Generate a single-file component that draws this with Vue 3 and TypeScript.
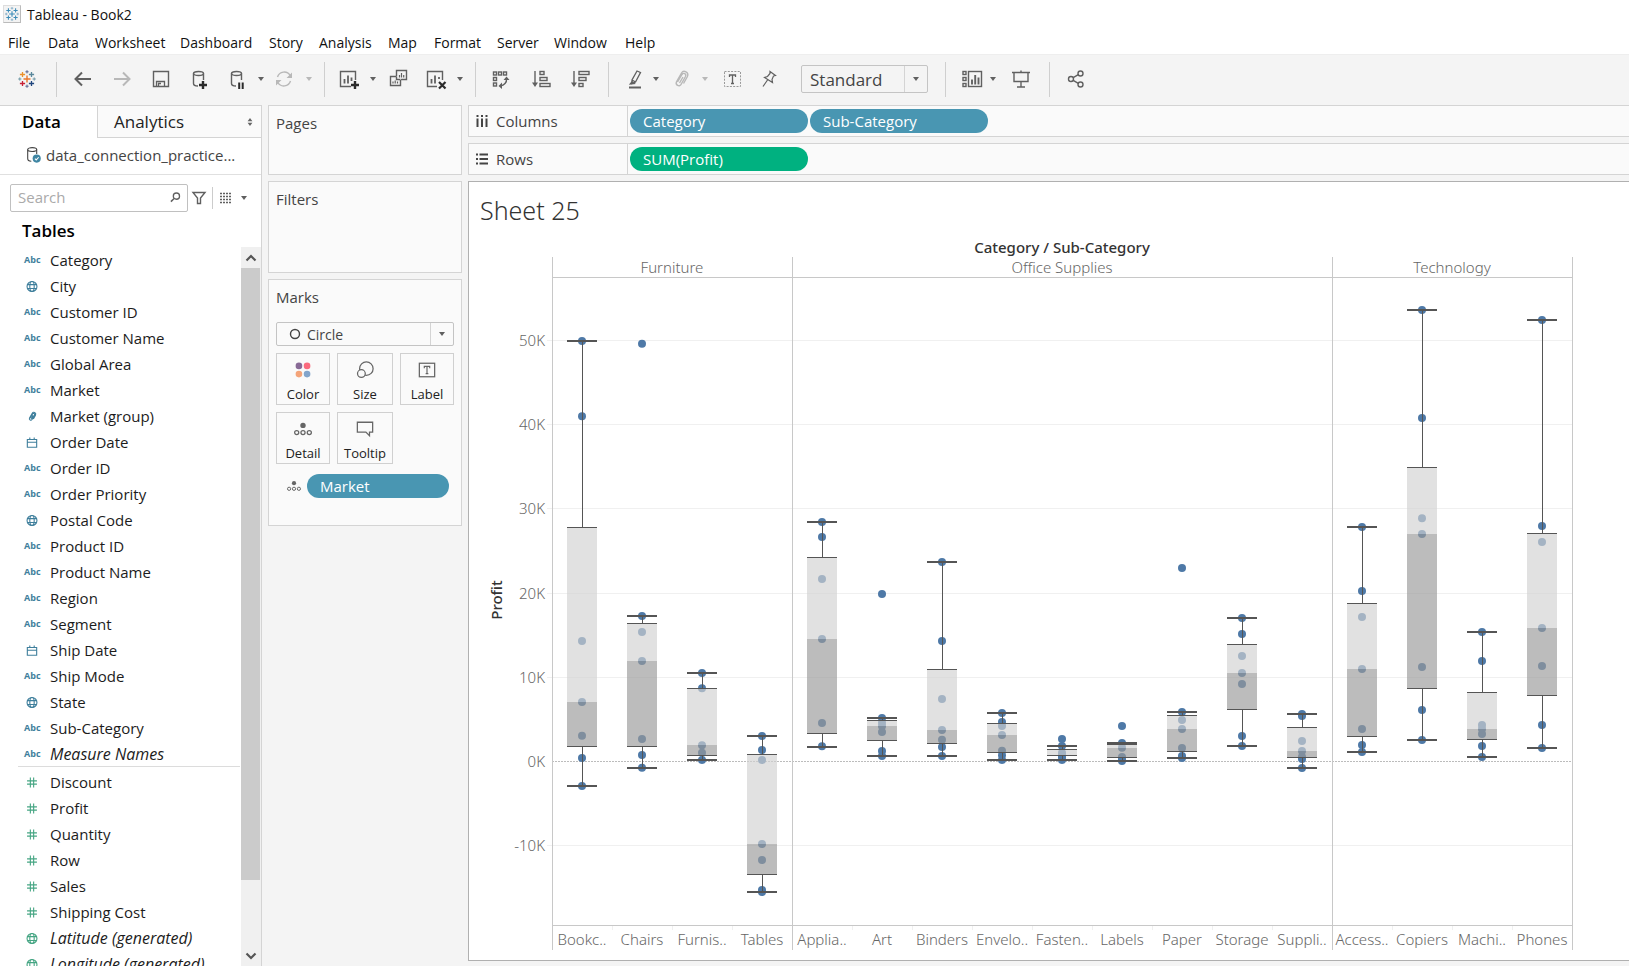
<script setup lang="ts">
import { ref } from 'vue'

interface Field {
  name: string
  kind: 'text' | 'geo' | 'date' | 'group' | 'number'
  italic?: boolean
}
interface Box {
  label: string
  whiskers: [number, number]
  box: [number, number, number]
  points: number[]
}
interface Tool {
  type: 'icon' | 'caret' | 'sep' | 'fit'
  icon?: string
  label?: string
  muted?: boolean
}

const search = ref('')
const fit = ref('Standard')
const mark = ref('Circle')

const menus = ['File', 'Data', 'Worksheet', 'Dashboard', 'Story', 'Analysis', 'Map', 'Format', 'Server', 'Window', 'Help']

const plus = (x: number, y: number, r: number, color: string, w = 1) =>
  `<path d="M${x - r} ${y}H${x + r}M${x} ${y - r}V${y + r}" stroke="${color}" stroke-width="${w}"/>`

const logo = (c: string[]) =>
  plus(10, 10, 3.5, c[0], 1.4) + plus(5.5, 5.5, 2.6, c[1], 1.3) + plus(14.5, 5.5, 2.6, c[2], 1.3) +
  plus(5.5, 14.5, 2.6, c[3], 1.3) + plus(14.5, 14.5, 2.6, c[4], 1.3) +
  plus(10, 2.8, 1.6, c[5]) + plus(10, 17.2, 1.6, c[5]) + plus(2.8, 10, 1.6, c[6]) + plus(17.2, 10, 1.6, c[6])

const squares = (list: number[][]) =>
  list.map(([x, y, w, h]) => `<rect x="${x}" y="${y}" width="${w}" height="${h}"/>`).join('')

const clip = '<path d="M6.500 13 11 5.500C12.500 3.200 15.700 5 14.500 7.500L10 15.500C8.500 18.300 4 16 5.500 12.800L10.500 4C12.500.5 18.500 3.200 16.300 7.800L12.500 14.500M12 8 8.500 14"/>'
const globe = '<circle cx="10" cy="10" r="9"/><ellipse cx="10" cy="10" rx="4" ry="9"/><path d="M2 6.500H18M2 13.500H18"/>'

const icons: Record<string, string> = {
  logo: logo(['#e8762c', '#eb912c', '#59879b', '#c72035', '#1f457e', '#5b6591', '#7099a6']),
  app: logo(['#3c8cb8', '#3c8cb8', '#3c8cb8', '#3c8cb8', '#3c8cb8', '#7fa9c4', '#7fa9c4']),
  back: '<path d="M2.500 10H18M9 3.500 2.500 10 9 16.500" stroke-width="2"/>',
  forward: '<path d="M2 10H17.500M11 3.500 17.500 10 11 16.500" stroke-width="2"/>',
  save: '<path d="M2.500 2.500H17.500V17.500H2.500Z"/><path d="M5.500 17.500V12.500H13.500V17.500M7.500 17V14.500H10" stroke-width="1.300"/>',
  addData: '<ellipse cx="8.500" cy="4.500" rx="5" ry="2"/><path d="M3.500 4.500V14.500C3.500 16 5 17 8 17M13.500 4.500V11"/><path d="M9 16H17M13 12V20" stroke="#2b2b2b" stroke-width="2.400"/>',
  pause: '<ellipse cx="9.500" cy="4.500" rx="5" ry="2"/><path d="M4.500 4.500V14.500C4.500 16 6 17 9 17M14.500 4.500V11"/><path d="M12.200 13.500V20M15.700 13.500V20" stroke="#2b2b2b" stroke-width="2"/>',
  refresh: '<path d="M3.500 8A7 7 0 0 1 16.200 6.500M16.500 12A7 7 0 0 1 3.800 13.500"/><path d="M18 3.500V9H12.500ZM2 16.500V11H7.500Z" fill="currentColor" stroke="none"/>',
  addSheet: '<path d="M12 17.500H1.500V2.500H16.500V11"/><path d="M5.500 14.500V10M9 14.500V6.500M12.500 12V8.500" stroke-width="1.800"/><path d="M12 16H20M16 12V20" stroke="#2b2b2b" stroke-width="2.400"/>',
  duplicate: '<path d="M8.500 7V1.500H18.500V10.500H13M8.500 7.500H2.500V16.500H12.500V11M8.500 7.500V10.500H12.500"/><path d="M11.500 8.500V6M13.500 8.500V4M15.700 8.500V6M5 14.500V12.500M7.200 14.500V11.500M9.500 14.500V12.500" stroke-width="1.200"/>',
  clearSheet: '<path d="M11 17.500H1.500V2.500H16.500V11"/><path d="M5.500 14.500V10M9 14.500V6.500M13 10V8" stroke-width="1.800"/><path d="M13 13 19.500 19.500M19.500 13 13 19.500" stroke="#2b2b2b" stroke-width="2.200"/>',
  swap: squares([[2.5, 3, 3, 3], [7.5, 3, 3, 3], [12.5, 3, 3, 3], [2.5, 8.5, 3, 3], [2.5, 14, 3, 3]]) + '<path d="M15.500 9.500C16 13.500 13 16.500 9.500 16.800"/><path d="M12.500 11 15.500 7.500 18.500 11ZM11 13.500 7.500 17 11 20Z" fill="currentColor" stroke="none"/>',
  sortAsc: '<path d="M4 2V16"/><path d="M1 13.500H7L4 18Z" fill="currentColor" stroke="none"/>' + squares([[9, 2.5, 4, 3], [9, 8.5, 7, 3], [9, 14.5, 10, 3]]),
  sortDesc: '<path d="M4 2V16"/><path d="M1 13.500H7L4 18Z" fill="currentColor" stroke="none"/>' + squares([[9, 2.5, 10, 3], [9, 8.5, 7, 3], [9, 14.5, 4, 3]]),
  highlight: '<path d="M12 2 15.500 3.500 10.500 13 7 14.500 7 11ZM7 11 10.500 13" stroke-width="1.300"/><path d="M5.500 14.800 7 13 9 14.500Z" fill="currentColor"/><path d="M4 18.500H16" stroke-width="2"/>',
  clip,
  label: '<rect x="2.500" y="2.500" width="16" height="15" stroke-dasharray="2 1.300" stroke="#999" stroke-width="1"/><path d="M7.500 8V6H13.500V8M10.500 6V14.500M9 14.500H12" stroke-width="1.300"/>',
  pin: '<path d="M11 2.500 16.500 6.500 14.500 7 13 10.500 13.500 13.500 5.500 8.500 8.500 7.500 11 4.500ZM8.500 11 4 17.500" stroke-width="1.200"/>',
  showMe: squares([[1, 2.5, 3, 3], [1, 8.5, 3, 3], [1, 14.5, 3, 3], [6.5, 2.5, 13, 15]]) + '<path d="M10 15.500V10.500M13.200 15.500V6M16.500 15.500V8.500" stroke-width="1.900"/>',
  present: '<path d="M1 3.500H19M3 3.500V12.500H17V3.500M10 1.500V3.500M10 12.500V18M6 18H14"/>',
  share: '<circle cx="14.500" cy="4.500" r="2.500"/><circle cx="5" cy="10" r="2.500"/><circle cx="14.500" cy="15.500" r="2.500"/><path d="M7.200 8.700 12.300 5.700M7.200 11.300 12.300 14.300"/>',
  geo: globe,
  group: clip,
  date: '<path d="M1.500 4.500H18.500V18.500H1.500ZM1.500 9.500H18.500M6 1V4.500M14 1V4.500"/>',
  number: '<path d="M7 1V19M13 1V19M1 7H19M1 13H19"/>',
  color: '<g stroke="none"><circle cx="5.500" cy="5.500" r="3.700" fill="#886a96"/><circle cx="14.500" cy="5.500" r="3.700" fill="#fb6b7e"/><circle cx="5.500" cy="14.500" r="3.700" fill="#f4a479"/><circle cx="14.500" cy="14.500" r="3.700" fill="#83a5cb"/></g>',
  size: '<circle cx="11.500" cy="8.500" r="7.500"/><circle cx="6" cy="14" r="4.300" fill="#fafafa"/>',
  text: '<rect x="1.500" y="2.500" width="17" height="15"/><path d="M7 8V6H13V8M10 6V14M8.500 14H11.500" stroke-width="1.300"/>',
  detail: '<circle cx="10" cy="6" r="3" fill="currentColor" stroke="none"/><circle cx="3" cy="14" r="2.300"/><circle cx="10" cy="14" r="2.300"/><circle cx="17" cy="14" r="2.300"/>',
  tooltip: '<path d="M1.500 2.500H18.500V13.500H15V17.500L11 13.500H1.500Z"/>',
}

const tools: Tool[] = [
  { type: 'icon', icon: 'logo', label: 'Start page' },
  { type: 'sep' },
  { type: 'icon', icon: 'back', label: 'Undo' },
  { type: 'icon', icon: 'forward', label: 'Redo', muted: true },
  { type: 'icon', icon: 'save', label: 'Save' },
  { type: 'icon', icon: 'addData', label: 'New data source' },
  { type: 'icon', icon: 'pause', label: 'Pause auto updates' },
  { type: 'caret', label: 'Update options' },
  { type: 'icon', icon: 'refresh', label: 'Run update', muted: true },
  { type: 'caret', label: 'Run options', muted: true },
  { type: 'sep' },
  { type: 'icon', icon: 'addSheet', label: 'New worksheet' },
  { type: 'caret', label: 'New sheet options' },
  { type: 'icon', icon: 'duplicate', label: 'Duplicate' },
  { type: 'icon', icon: 'clearSheet', label: 'Clear sheet' },
  { type: 'caret', label: 'Clear options' },
  { type: 'sep' },
  { type: 'icon', icon: 'swap', label: 'Swap rows and columns' },
  { type: 'icon', icon: 'sortAsc', label: 'Sort ascending' },
  { type: 'icon', icon: 'sortDesc', label: 'Sort descending' },
  { type: 'sep' },
  { type: 'icon', icon: 'highlight', label: 'Highlight' },
  { type: 'caret', label: 'Highlight options' },
  { type: 'icon', icon: 'clip', label: 'Group members', muted: true },
  { type: 'caret', label: 'Group options', muted: true },
  { type: 'icon', icon: 'label', label: 'Show mark labels' },
  { type: 'icon', icon: 'pin', label: 'Fix axes' },
  { type: 'fit' },
  { type: 'sep' },
  { type: 'icon', icon: 'showMe', label: 'Show cards' },
  { type: 'caret', label: 'Card options' },
  { type: 'icon', icon: 'present', label: 'Presentation mode' },
  { type: 'sep' },
  { type: 'icon', icon: 'share', label: 'Share' },
]

const dimensions: Field[] = [
  { name: 'Category', kind: 'text' },
  { name: 'City', kind: 'geo' },
  { name: 'Customer ID', kind: 'text' },
  { name: 'Customer Name', kind: 'text' },
  { name: 'Global Area', kind: 'text' },
  { name: 'Market', kind: 'text' },
  { name: 'Market (group)', kind: 'group' },
  { name: 'Order Date', kind: 'date' },
  { name: 'Order ID', kind: 'text' },
  { name: 'Order Priority', kind: 'text' },
  { name: 'Postal Code', kind: 'geo' },
  { name: 'Product ID', kind: 'text' },
  { name: 'Product Name', kind: 'text' },
  { name: 'Region', kind: 'text' },
  { name: 'Segment', kind: 'text' },
  { name: 'Ship Date', kind: 'date' },
  { name: 'Ship Mode', kind: 'text' },
  { name: 'State', kind: 'geo' },
  { name: 'Sub-Category', kind: 'text' },
  { name: 'Measure Names', kind: 'text', italic: true },
]
const measures: Field[] = [
  { name: 'Discount', kind: 'number' },
  { name: 'Profit', kind: 'number' },
  { name: 'Quantity', kind: 'number' },
  { name: 'Row', kind: 'number' },
  { name: 'Sales', kind: 'number' },
  { name: 'Shipping Cost', kind: 'number' },
  { name: 'Latitude (generated)', kind: 'geo', italic: true },
  { name: 'Longitude (generated)', kind: 'geo', italic: true },
]
const fieldGroups = [
  { id: 'dimensions', fields: dimensions },
  { id: 'measures', fields: measures },
]

const markButtons = [
  { icon: 'color', label: 'Color' },
  { icon: 'size', label: 'Size' },
  { icon: 'text', label: 'Label' },
  { icon: 'detail', label: 'Detail' },
  { icon: 'tooltip', label: 'Tooltip' },
]

/* Profit in thousands; box holds upper hinge, median, lower hinge. */
const boxes: Box[] = [
  { label: 'Bookc..', whiskers: [49.94, -2.91], box: [27.8, 7.07, 1.8], points: [49.94, 41, 14.31, 7.07, 3.07, 0.42, -2.91] },
  { label: 'Chairs', whiskers: [17.28, -0.73], box: [16.4, 11.94, 1.8], points: [49.6, 17.28, 15.38, 11.94, 2.67, 0.77, -0.73] },
  { label: 'Furnis..', whiskers: [10.51, 0.22], box: [8.69, 1.96, 0.73], points: [10.51, 8.7, 1.94, 1.05, 0.18] },
  { label: 'Tables', whiskers: [3.03, -15.5], box: [0.85, -9.8, -13.4], points: [3.03, 1.37, 0.18, -9.8, -11.7, -15.26, -15.5] },
  { label: 'Applia..', whiskers: [28.44, 1.72], box: [24.25, 14.55, 3.35], points: [28.44, 26.66, 21.67, 14.55, 4.57, 1.8] },
  { label: 'Art', whiskers: [5.17, 0.65], box: [4.89, 4.22, 2.51], points: [19.89, 5.17, 4.6, 4.2, 3.5, 1.25, 0.65] },
  { label: 'Binders', whiskers: [23.69, 0.65], box: [10.95, 3.74, 2.16], points: [23.69, 14.31, 7.42, 3.74, 2.59, 1.72, 0.65] },
  { label: 'Envelo..', whiskers: [5.76, 0.22], box: [4.53, 3.15, 1.09], points: [5.76, 4.69, 4.22, 3.15, 1.29, 0.73, 0.18] },
  { label: 'Fasten..', whiskers: [1.84, 0.22], box: [1.44, 0.75, 0.73], points: [2.67, 1.84, 1.05, 0.75, 0.53, 0.18] },
  { label: 'Labels', whiskers: [2.2, 0.06], box: [2.04, 1.64, 0.49], points: [4.22, 2.2, 1.64, 0.53, 0.26, 0.06] },
  { label: 'Paper', whiskers: [5.88, 0.42], box: [5.48, 3.86, 1.21], points: [22.98, 5.88, 4.93, 3.86, 1.6, 0.65, 0.42] },
  { label: 'Storage', whiskers: [17.04, 1.84], box: [13.92, 10.51, 6.2], points: [17.04, 15.14, 12.53, 10.51, 9.2, 3.03, 1.84] },
  { label: 'Suppli..', whiskers: [5.64, -0.77], box: [4.06, 1.25, 0.49], points: [5.64, 5.4, 2.43, 1.25, 0.57, 0.3, -0.77] },
  { label: 'Access..', whiskers: [27.85, 1.13], box: [18.78, 10.99, 2.99], points: [27.85, 20.25, 17.16, 10.99, 3.86, 1.96, 1.13] },
  { label: 'Copiers', whiskers: [53.62, 2.55], box: [34.9, 27.02, 8.69], points: [53.62, 40.8, 28.9, 27.02, 11.22, 6.12, 2.55] },
  { label: 'Machi..', whiskers: [15.38, 0.53], box: [8.21, 3.86, 2.63], points: [15.38, 11.94, 4.33, 3.86, 3.27, 1.84, 0.53] },
  { label: 'Phones', whiskers: [52.43, 1.6], box: [27.1, 15.86, 7.86], points: [52.43, 27.97, 26.07, 15.86, 11.34, 4.33, 1.6] },
]
const categories = [
  { name: 'Furniture', from: 0, to: 4 },
  { name: 'Office Supplies', from: 4, to: 13 },
  { name: 'Technology', from: 13, to: 17 },
]
const ticks = [50, 40, 30, 20, 10, 0, -10]

const cell = 60
const left = 83
const plotTop = 35
const plotBottom = 683
const right = left + cell * boxes.length
const y = (v: number) => 519.5 - v * 8.42
const snap = (v: number) => Math.floor(y(v)) + 0.5
const cx = (i: number) => left + cell * i + cell / 2
</script>

<template>
  <div class="app">
    <header class="titlebar">
      <span class="app-icon"><svg viewBox="0 0 20 20" v-html="icons.app"></svg></span>
      <span>Tableau - Book2</span>
    </header>
    <nav class="menubar" aria-label="Main menu">
      <button v-for="m in menus" :key="m" type="button">{{ m }}</button>
    </nav>

    <div class="toolbar" role="toolbar" aria-label="Toolbar">
      <template v-for="(t, i) in tools" :key="i">
        <span v-if="t.type === 'sep'" class="sep"></span>
        <button v-else-if="t.type === 'icon'" type="button" class="tool" :class="{ muted: t.muted }" :aria-label="t.label">
          <svg viewBox="0 0 20 20" v-html="icons[t.icon ?? '']"></svg>
        </button>
        <button v-else-if="t.type === 'caret'" type="button" class="drop" :class="{ muted: t.muted }" :aria-label="t.label">
          <i class="caret"></i>
        </button>
        <div v-else class="picker fit">
          <select v-model="fit" aria-label="Fit">
            <option>Standard</option>
            <option>Entire View</option>
          </select>
          <span class="picker-arrow"><i class="caret"></i></span>
        </div>
      </template>
    </div>

    <main class="workspace">
      <aside class="data-pane">
        <div class="tabs">
          <button type="button" class="tab active">Data</button>
          <button type="button" class="tab">Analytics
            <svg class="updown" viewBox="0 0 6 10"><path d="M0 4 3 0 6 4ZM0 6 3 10 6 6Z" /></svg>
          </button>
        </div>
        <button type="button" class="source">
          <svg viewBox="0 0 20 20"><ellipse cx="8" cy="4" rx="5" ry="2.200" /><path d="M3 4V14C3 16 5 17 7 17M13 4V9" /><circle cx="13" cy="14" r="4.500" fill="#3f86a3" stroke="none" /><path d="M11 14 12.500 15.500 15.200 12.500" stroke="#fff" /></svg>
          <span>data_connection_practice...</span>
        </button>
        <div class="search-row">
          <label class="search">
            <input v-model="search" type="text" placeholder="Search" aria-label="Search" />
            <svg viewBox="0 0 12 12"><circle cx="7" cy="4.500" r="3.400" /><path d="M4.500 7 1 10.500" stroke-width="1.600" /></svg>
          </label>
          <button type="button" class="filter" aria-label="Filter fields">
            <svg viewBox="0 0 14 14"><path d="M1 1.500H13L8.500 7V12.500H5.500V7Z" /></svg>
          </button>
          <button type="button" class="view" aria-label="View options">
            <svg viewBox="0 0 14 12"><path d="M1 1.500H13M1 4.500H13M1 7.500H13M1 10.500H13" stroke-dasharray="2 1" stroke-width="1.300" /></svg>
            <i class="caret"></i>
          </button>
        </div>
        <h2>Tables</h2>
        <div class="fields">
          <div class="field-list">
            <ul v-for="g in fieldGroups" :key="g.id" :class="g.id">
              <li v-for="f in g.fields" :key="f.name" :class="{ italic: f.italic }">
                <span v-if="f.kind === 'text'" class="abc">Abc</span>
                <svg v-else viewBox="0 0 20 20" v-html="icons[f.kind]"></svg>
                <span>{{ f.name }}</span>
              </li>
            </ul>
          </div>
          <div class="scrollbar">
            <button type="button" aria-label="Scroll up"><svg viewBox="0 0 12 12"><path d="M1.500 8.500 6 4 10.500 8.500" /></svg></button>
            <span class="thumb"></span>
            <button type="button" class="down" aria-label="Scroll down"><svg viewBox="0 0 12 12"><path d="M1.500 3.500 6 8 10.500 3.500" /></svg></button>
          </div>
        </div>
      </aside>

      <section class="cards">
        <div class="card pages"><h3>Pages</h3></div>
        <div class="card filters"><h3>Filters</h3></div>
        <div class="card marks">
          <h3>Marks</h3>
          <div class="picker mark-type">
            <svg class="ring" viewBox="0 0 12 12"><circle cx="6" cy="6" r="4.500" /></svg>
            <select v-model="mark" aria-label="Mark type">
              <option>Circle</option>
              <option>Square</option>
            </select>
            <span class="picker-arrow"><i class="caret"></i></span>
          </div>
          <div class="mark-grid">
            <button v-for="b in markButtons" :key="b.label" type="button">
              <svg viewBox="0 0 20 20" v-html="icons[b.icon]"></svg>
              <span>{{ b.label }}</span>
            </button>
          </div>
          <div class="mark-field">
            <svg viewBox="0 0 20 20" v-html="icons.detail"></svg>
            <button type="button" class="pill">Market</button>
          </div>
        </div>
      </section>

      <section class="view-pane">
        <div class="shelf">
          <div class="shelf-name">
            <svg viewBox="0 0 14 14"><path d="M2.500 1V3M7 1V3M11.500 1V3M2.500 4.500V13M7 4.500V13M11.500 4.500V13" /></svg>Columns
          </div>
          <button type="button" class="pill">Category</button>
          <button type="button" class="pill">Sub-Category</button>
        </div>
        <div class="shelf">
          <div class="shelf-name">
            <svg viewBox="0 0 14 14"><path d="M1 2.500H3M1 7H3M1 11.500H3M4.500 2.500H13M4.500 7H13M4.500 11.500H13" /></svg>Rows
          </div>
          <button type="button" class="pill measure">SUM(Profit)</button>
        </div>

        <article class="sheet">
          <h1>Sheet 25</h1>
          <svg class="chart" width="1160" height="718" role="img" aria-label="Profit by category and sub-category">
            <text class="heading" :x="(left + right) / 2" y="11">Category / Sub-Category</text>
            <text v-for="c in categories" :key="c.name" class="tick" :x="left + (c.from + c.to) * cell / 2" y="31">{{ c.name }}</text>
            <text class="heading" transform="translate(33 358) rotate(-90)">Profit</text>

            <g v-for="t in ticks" :key="t">
              <path :class="t ? 'grid' : 'zero'" :d="`M${t ? left - 5 : left} ${snap(t)}H${right}`" />
              <text class="tick value" x="76" :y="snap(t) + 5">{{ t }}K</text>
            </g>
            <path v-for="(b, i) in boxes" :key="b.label" class="grid" :d="`M${left + i * cell + 0.5} ${plotBottom}v5`" />
            <path class="frame" :d="`M${left} ${plotTop + 0.5}H${right}M${left} ${plotBottom + 0.5}H${right}`" />
            <path class="frame" :d="`M${left + 0.5} 15V708`" />
            <path v-for="c in categories" :key="c.name" class="frame" :d="`M${left + c.to * cell + 0.5} 15V708`" />

            <g v-for="(b, i) in boxes" :key="b.label">
              <circle v-for="(p, k) in b.points" :key="k" class="dot" :cx="cx(i)" :cy="y(p)" r="4" />
              <rect class="upper" :x="cx(i) - 15" :y="Math.round(y(b.box[0]))" width="30" :height="Math.round(y(b.box[1])) - Math.round(y(b.box[0]))" />
              <rect class="lower" :x="cx(i) - 15" :y="Math.round(y(b.box[1]))" width="30" :height="Math.round(y(b.box[2])) - Math.round(y(b.box[1]))" />
              <path class="hinge" :d="`M${cx(i) - 15} ${snap(b.box[0])}h30M${cx(i) - 15} ${snap(b.box[2])}h30M${cx(i) + 0.5} ${y(b.whiskers[0])}V${snap(b.box[0])}M${cx(i) + 0.5} ${snap(b.box[2])}V${y(b.whiskers[1])}`" />
              <path class="cap" :d="`M${cx(i) - 15} ${Math.round(y(b.whiskers[0]))}h30M${cx(i) - 15} ${Math.round(y(b.whiskers[1]))}h30`" />
              <text class="tick" :x="cx(i)" y="703">{{ b.label }}</text>
            </g>
          </svg>
        </article>
      </section>
    </main>
  </div>
</template>

<style>
body {
  overflow: hidden;
}
</style>

<style scoped>
.app {
  display: flex;
  flex-direction: column;
  height: 100vh;
  overflow: hidden;
  background: #f4f4f4;
  color: #333;
  font-family: "Open Sans", "Noto Sans", sans-serif;
  font-size: 15px;
}
.app *, .app *::before {
  box-sizing: border-box;
}
button {
  padding: 0;
  border: 0;
  background: none;
  color: inherit;
  font: inherit;
  text-align: left;
}
svg {
  flex: none;
  overflow: visible;
  fill: none;
  stroke: currentColor;
  stroke-width: 1.4;
}
h1, h2, h3, ul {
  margin: 0;
  padding: 0;
  font-weight: 400;
}
li {
  list-style: none;
}

.titlebar {
  display: flex;
  flex: none;
  align-items: center;
  gap: 6px;
  height: 30px;
  padding: 0 0 2px 3px;
  background: #fff;
  color: #111;
  font-size: 14px;
}
.app-icon {
  width: 18px;
  height: 18px;
  border: 1px solid #ddd;
  border-right-color: #bbb;
  border-bottom-color: #bbb;
  background: #f3f3f3;
}
.app-icon svg {
  display: block;
  width: 16px;
  height: 16px;
}
.menubar {
  display: grid;
  flex: none;
  grid-template-columns: 40px 47px 85px 89px 50px 69px 46px 63px 57px 71px 40px;
  align-items: center;
  height: 24px;
  padding-left: 8px;
  background: #fff;
  color: #111;
  font-size: 14px;
  white-space: nowrap;
}

.toolbar {
  display: grid;
  flex: none;
  grid-template-columns: 39px 17px 39px 39px 39px 37px 31px 16px 32px 18px 15px 31px 18px 38px 31px 18px 16px 40px 39px 38px 17px 28px 18px 31px 20px 37px 42px 144px 17px 28px 21px 38px 17px 20px;
  align-items: center;
  height: 51px;
  padding: 0 0 2px 17px;
  border-top: 1px solid #eee;
  color: #606060;
}
.tool, .tool svg {
  display: block;
  width: 20px;
  height: 20px;
}
.muted {
  color: #b8b8b8;
}
.sep {
  width: 1px;
  height: 35px;
  background: #cfcfcf;
}
.drop {
  display: flex;
  width: 8px;
  height: 20px;
  align-items: center;
}
.caret {
  width: 0;
  height: 0;
  border: 3px solid transparent;
  border-top: 4px solid currentColor;
  border-bottom: 0;
}
.picker {
  display: flex;
  align-items: stretch;
  border: 1px solid #c4c4c4;
  border-radius: 2px;
  color: #444;
}
.picker select {
  flex: 1;
  min-width: 0;
  padding: 0;
  border: 0;
  outline: 0;
  appearance: none;
  background: none;
  color: inherit;
  font: inherit;
}
.picker-arrow {
  display: flex;
  align-items: center;
  justify-content: center;
  width: 23px;
  border-left: 1px solid #d4d4d4;
  color: #606060;
}
.fit {
  width: 127px;
  height: 28px;
  padding-left: 8px;
  font-size: 17px;
}

.workspace {
  display: flex;
  flex: 1;
  min-height: 0;
  gap: 6px;
}
.data-pane {
  display: flex;
  flex: none;
  flex-direction: column;
  width: 262px;
  border-right: 1px solid #d4d4d4;
  background: #fff;
}
.tabs {
  display: flex;
  flex: none;
  height: 33px;
}
.tab {
  display: flex;
  flex: 1;
  align-items: center;
  justify-content: space-between;
  padding: 0 8px 0 16px;
  border: 1px solid #d4d4d4;
  border-right: 0;
  background: #fafafa;
  color: #222;
  font-size: 17px;
}
.tab.active {
  flex: 0 0 97px;
  padding: 0 0 2px 22px;
  border: 0;
  border-top: 1px solid #d4d4d4;
  background: #fff;
  color: #000;
  font-weight: 600;
}
.updown {
  width: 6px;
  height: 8px;
  fill: #666;
  stroke: none;
}
.source {
  display: flex;
  flex: none;
  align-items: center;
  gap: 2px;
  height: 37px;
  padding: 0 0 2px 24px;
  border-bottom: 1px solid #e0e0e0;
  color: #444;
}
.source svg {
  width: 20px;
  height: 18px;
  stroke-width: 1.2;
}
.search-row {
  display: flex;
  flex: none;
  align-items: center;
  height: 28px;
  margin: 9px 0 0 10px;
  color: #606060;
}
.search {
  display: flex;
  align-items: center;
  width: 178px;
  height: 28px;
  padding: 0 6px 2px 7px;
  border: 1px solid #c0c0c0;
  border-radius: 2px;
}
.search input {
  flex: 1;
  min-width: 0;
  padding: 0;
  border: 0;
  outline: 0;
  background: none;
  font: inherit;
}
.search input::placeholder {
  color: #aaa;
}
.search svg {
  width: 11px;
  height: 11px;
}
.filter {
  margin: 0 6px 0 4px;
}
.filter svg {
  display: block;
  width: 14px;
  height: 14px;
}
.view {
  display: flex;
  align-items: center;
  gap: 8px;
  height: 22px;
  padding-left: 6px;
  border-left: 1px solid #ccc;
}
.view svg {
  width: 14px;
  height: 12px;
}
h2 {
  flex: none;
  height: 35px;
  padding-left: 22px;
  color: #000;
  font-size: 17px;
  font-weight: 600;
  line-height: 37px;
}
.fields {
  display: flex;
  flex: 1;
  min-height: 0;
  justify-content: space-between;
}
.field-list {
  width: 240px;
  overflow: hidden;
}
.field-list li {
  display: flex;
  align-items: center;
  height: 26px;
  color: #1c1c1c;
  line-height: 26px;
}
.field-list li > :first-child {
  width: 16px;
  margin: 0 10px 0 24px;
  color: #3f7f9c;
}
.field-list li > svg {
  width: 16px;
  height: 11px;
  stroke-width: 2;
}
.field-list .measures li > svg {
  color: #45a583;
}
.field-list li > .abc {
  font-size: 9px;
  font-weight: 700;
}
.measures {
  margin: -1px 0 0 18px;
  padding-top: 2px;
  border-top: 1px solid #dcdcdc;
}
.measures li {
  margin-left: -18px;
}
.italic > :last-child {
  font-size: 16px;
  font-style: italic;
}
.scrollbar {
  display: flex;
  flex-direction: column;
  width: 20px;
  background: #f0f0f0;
}
.scrollbar button {
  display: flex;
  flex: none;
  align-items: center;
  justify-content: center;
  height: 21px;
  color: #555;
}
.scrollbar svg {
  width: 12px;
  height: 12px;
  stroke-width: 2.2;
}
.thumb {
  flex: 612;
  width: 19px;
  background: #cbcbcb;
}
.scrollbar::after {
  flex: 65;
  order: 1;
  content: "";
}
.scrollbar .down {
  order: 2;
}

.cards {
  display: flex;
  flex: none;
  flex-direction: column;
  gap: 6px;
  width: 194px;
}
.card {
  padding: 0 7px;
  border: 1px solid #d4d4d4;
  background: #fafafa;
}
.card h3 {
  height: 36px;
  font-size: 15px;
  line-height: 35px;
  color: #444;
}
.pages {
  height: 70px;
}
.filters {
  height: 92px;
}
.marks {
  height: 247px;
}
.mark-type {
  height: 24px;
  margin-top: 6px;
  font-size: 14px;
}
.ring {
  align-self: center;
  width: 12px;
  height: 12px;
  margin: 0 6px 0 12px;
}
.mark-grid {
  display: grid;
  grid-template-columns: 54fr 56fr 54fr;
  gap: 7px;
  margin-top: 7px;
}
.mark-grid button {
  display: flex;
  flex-direction: column;
  align-items: center;
  gap: 5px;
  height: 52px;
  padding-top: 7px;
  border: 1px solid #d0d0d0;
  color: #666;
  font-size: 13px;
  line-height: 20px;
}
.mark-grid svg {
  width: 18px;
  height: 18px;
}
.mark-grid span {
  color: #222;
}
.mark-field {
  display: flex;
  align-items: center;
  gap: 6px;
  margin-top: 10px;
  padding: 0 5px 0 11px;
  color: #666;
}
.mark-field svg {
  width: 14px;
  height: 14px;
}
.mark-field .pill {
  flex: 1;
}

.view-pane {
  display: flex;
  flex: 1;
  flex-direction: column;
  gap: 6px;
  min-width: 0;
}
.shelf {
  display: flex;
  flex: none;
  align-items: center;
  gap: 2px;
  height: 32px;
  border: 1px solid #d4d4d4;
  border-right: 0;
  background: #fafafa;
}
.shelf-name {
  display: flex;
  align-items: center;
  gap: 7px;
  width: 159px;
  height: 100%;
  padding-left: 6px;
  border-right: 1px solid #d4d4d4;
  color: #444;
}
.shelf-name svg {
  width: 14px;
  height: 14px;
  stroke-width: 2;
}
.pill {
  width: 178px;
  height: 24px;
  padding-left: 13px;
  border-radius: 12px;
  background: #4996b2;
  color: #fff;
  font-weight: 500;
  line-height: 24px;
}
.measure {
  background: #00b180;
}
.sheet {
  flex: 1;
  min-height: 0;
  margin-bottom: 5px;
  overflow: hidden;
  border: 1px solid #b0b0b0;
  border-right: 0;
  background: #fff;
}
.sheet h1 {
  height: 60px;
  padding-left: 11px;
  color: #333;
  font-family: "Noto Sans", "Open Sans", sans-serif;
  font-size: 25px;
  font-weight: 300;
  line-height: 57px;
}
.chart {
  display: block;
  stroke: none;
}
.chart text {
  font-family: "Noto Sans", "Open Sans", sans-serif;
  font-size: 15px;
  text-anchor: middle;
}
.heading {
  fill: #333;
  font-weight: 500;
}
.tick {
  fill: #666;
  font-weight: 300;
}
.chart .value {
  text-anchor: end;
}
.grid {
  stroke: #f0f0f0;
  stroke-width: 1;
}
.zero {
  stroke: #bcbcbc;
  stroke-width: 1;
  stroke-dasharray: 2 1;
}
.frame {
  stroke: #c8c8c8;
  stroke-width: 1;
}
.dot {
  fill: #4e79a7;
}
.upper {
  fill: #d2d2d2;
  fill-opacity: 0.66;
}
.lower {
  fill: #9a9a9a;
  fill-opacity: 0.66;
}
.hinge {
  stroke: #555;
  stroke-width: 1;
}
.cap {
  stroke: #555;
  stroke-width: 2;
}
</style>
